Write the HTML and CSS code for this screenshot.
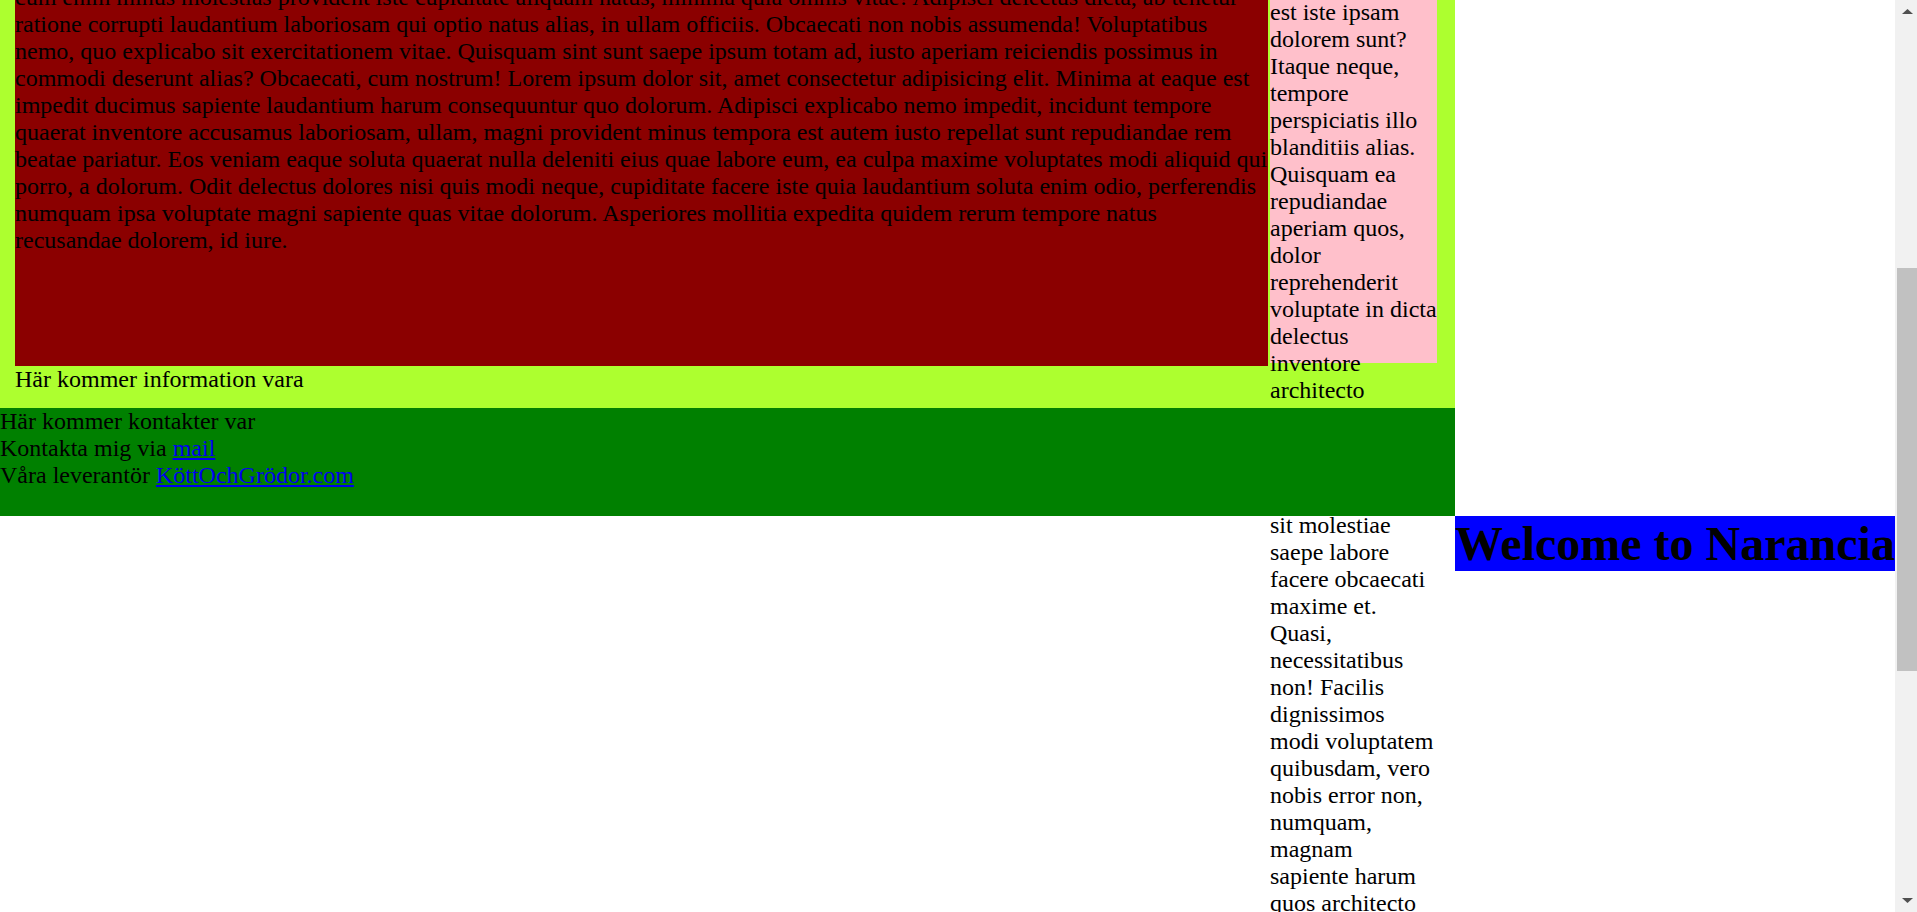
FILE: index.html
```html
<!DOCTYPE html>
<html lang="sv">
<head>
<meta charset="utf-8">
<title>Narancia</title>
<link rel="stylesheet" href="styles.css">
</head>
<body class="page">
  <main class="main">
    <div class="content">
      <article class="article">
        <p class="text">Lorem ipsum dolor sit amet consectetur adipisicing elit. Quae, dolorum! Voluptatum laboriosam, quas nostrum eveniet repellendus ipsam natus rerum ratione deserunt nihil incidunt officiis aliquam sunt cumque tempore magnam. Sed, delectus odio. Iure maiores, explicabo accusantium consequuntur quod nemo numquam officia vitae ad fugit ab veniam eos praesentium harum modi facilis illo nisi atque corporis nobis! Eveniet nam quisquam fugiat voluptates necessitatibus labore distinctio, dolores sequi quasi assumenda velit culpa odit architecto aut ea laudantium tenetur provident hic saepe. Dolor rem porro recusandae natus quaerat iste mollitia error, doloribus perspiciatis expedita animi quibusdam ullam omnis voluptatem eligendi, nostrum laborum aspernatur neque ipsa soluta. Repellat eius cupiditate minima excepturi, sint voluptas impedit quo illum fuga. Atque voluptatibus facere quam pariatur dicta similique, molestias, dignissimos, beatae itaque minus rem ipsum exercitationem autem maxime commodi nulla earum aperiam!</p>
        <p class="text">cum enim minus molestias provident iste cupiditate aliquam natus, minima quia omnis vitae! Adipisci delectus dicta, ab tenetur ratione corrupti laudantium laboriosam qui optio natus alias, in ullam officiis. Obcaecati non nobis assumenda! Voluptatibus nemo, quo explicabo sit exercitationem vitae. Quisquam sint sunt saepe ipsum totam ad, iusto aperiam reiciendis possimus in commodi deserunt alias? Obcaecati, cum nostrum! Lorem ipsum dolor sit, amet consectetur adipisicing elit. Minima at eaque est impedit ducimus sapiente laudantium harum consequuntur quo dolorum. Adipisci explicabo nemo impedit, incidunt tempore quaerat inventore accusamus laboriosam, ullam, magni provident minus tempora est autem iusto repellat sunt repudiandae rem beatae pariatur. Eos veniam eaque soluta quaerat nulla deleniti eius quae labore eum, ea culpa maxime voluptates modi aliquid qui porro, a dolorum. Odit delectus dolores nisi quis modi neque, cupiditate facere iste quia laudantium soluta enim odio, perferendis numquam ipsa voluptate magni sapiente quas vitae dolorum. Asperiores mollitia expedita quidem rerum tempore natus recusandae dolorem, id iure.</p>
      </article>
      <aside class="aside">
        <p class="text">Lorem ipsum dolor sit amet consectetur adipisicing elit. Nobis, voluptatibus. Excepturi dolorum ratione nesciunt officia quibusdam, eveniet accusantium fugit voluptatem ipsa odit sequi corporis totam nostrum? Atque, laudantium optio dolorum tenetur repellendus exercitationem est iste ipsam dolorem sunt? Itaque neque, tempore perspiciatis illo blanditiis alias. Quisquam ea repudiandae aperiam quos, dolor reprehenderit voluptate in dicta delectus inventore architecto consequatur doloribus laboriosam voluptatem quia sit molestiae saepe labore facere obcaecati maxime et. Quasi, necessitatibus non! Facilis dignissimos modi voluptatem quibusdam, vero nobis error non, numquam, magnam sapiente harum quos architecto ad fugiat, eligendi assumenda natus ut voluptas omnis nesciunt temporibus ducimus! Dolorum officia eum laboriosam amet, nulla odio cumque eaque quasi perferendis hic.</p>
      </aside>
    </div>
    <div class="info">Här kommer information vara</div>
  </main>
  <footer class="footer">Här kommer kontakter var<br>Kontakta mig via <a class="link" href="#">mail</a><br>Våra leverantör <a class="link" href="#">KöttOchGrödor.com</a></footer>
  <header class="header">
    <h1 class="title">Welcome to Narancia</h1>
  </header>
  <div class="scrollbar" aria-hidden="true">
    <span class="sb-btn sb-up">
      <svg class="sb-arrow" width="11" height="5" viewBox="0 0 11 5"><path d="M0 5 L5.5 0 L11 5 Z" fill="#505050"/></svg>
    </span>
    <span class="sb-track"><span class="sb-thumb"></span></span>
    <span class="sb-btn sb-down">
      <svg class="sb-arrow" width="11" height="5" viewBox="0 0 11 5"><path d="M0 0 L5.5 5 L11 0 Z" fill="#505050"/></svg>
    </span>
  </div>
  <script src="script.js"></script>
</body>
</html>
```
FILE: styles.css
```css
html {
  background: #ffffff;
  scroll-behavior: auto;
  scrollbar-width: none;
}

.page {
  margin: 0;
  width: 1895px;
  min-height: 1969px;
  display: grid;
  grid-template-columns: minmax(0, 1fr) 440px;
  align-content: start;
  font-family: "Liberation Serif", "Times New Roman", serif;
  font-size: 24px;
  color: #000000;
}

.main {
  grid-column: 1;
  grid-row: 1;
  background: #adff2f;
  padding: 15px 18px 15px 15px;
}

.content {
  display: flex;
  align-items: flex-start;
  gap: 2px;
}

.article {
  flex: 1 1 auto;
  min-width: 0;
  box-sizing: border-box;
  height: 909px;
  padding-bottom: 112px;
  background: #8b0000;
  display: flex;
  flex-direction: column;
  justify-content: flex-end;
}

.aside {
  flex: none;
  width: 167px;
  box-sizing: border-box;
  height: 906px;
  padding-top: 2px;
  background: #ffc0cb;
}

.text {
  margin: 0;
}

.info {
  margin: 0;
}

.footer {
  grid-column: 1;
  grid-row: 2;
  background: #008000;
  padding-bottom: 27px;
}

.link {
  color: #0000ee;
}

.header {
  grid-column: 2;
  grid-row: 3;
  min-width: 0;
}

.title {
  margin: 0;
  background: #0000ff;
  font-size: 48px;
  font-weight: bold;
  white-space: nowrap;
  overflow: hidden;
}

/* drawn scrollbar (overlay at the right edge of the viewport) */
.scrollbar {
  position: fixed;
  top: 0;
  right: 0;
  width: 22px;
  height: 100vh;
  background: #f1f1f1;
  display: flex;
  flex-direction: column;
  z-index: 10;
}

.sb-btn {
  flex: none;
  height: 21px;
  box-sizing: border-box;
  display: flex;
  justify-content: flex-start;
  padding-left: 7px;
}

.sb-up {
  align-items: flex-start;
  padding-top: 9px;
}

.sb-down {
  align-items: flex-start;
  padding-top: 7px;
}

.sb-arrow {
  display: block;
}

.sb-track {
  flex: 1 1 auto;
  position: relative;
}

.sb-thumb {
  position: absolute;
  left: 2px;
  right: 0;
  top: 246px;
  height: 403px;
  background: #c1c1c1;
}
```
FILE: script.js
```js
(function () {
  if ('scrollRestoration' in history) {
    history.scrollRestoration = 'manual';
  }
  function place() {
    var article = document.querySelector('.article');
    if (!article) return;
    var bottom = article.getBoundingClientRect().bottom + window.scrollY;
    window.scrollTo(0, Math.round(bottom - 366));

    var thumb = document.querySelector('.sb-thumb');
    var track = document.querySelector('.sb-track');
    if (!thumb || !track) return;
    var docH = document.documentElement.scrollHeight;
    var vh = window.innerHeight;
    var trackH = track.clientHeight;
    var thumbH = trackH * vh / docH;
    var maxScroll = Math.max(1, docH - vh);
    var top = (trackH - thumbH) * window.scrollY / maxScroll;
    thumb.style.height = thumbH.toFixed(1) + 'px';
    thumb.style.top = top.toFixed(1) + 'px';
  }
  place();
  window.addEventListener('load', place);
  requestAnimationFrame(place);
})();
```
